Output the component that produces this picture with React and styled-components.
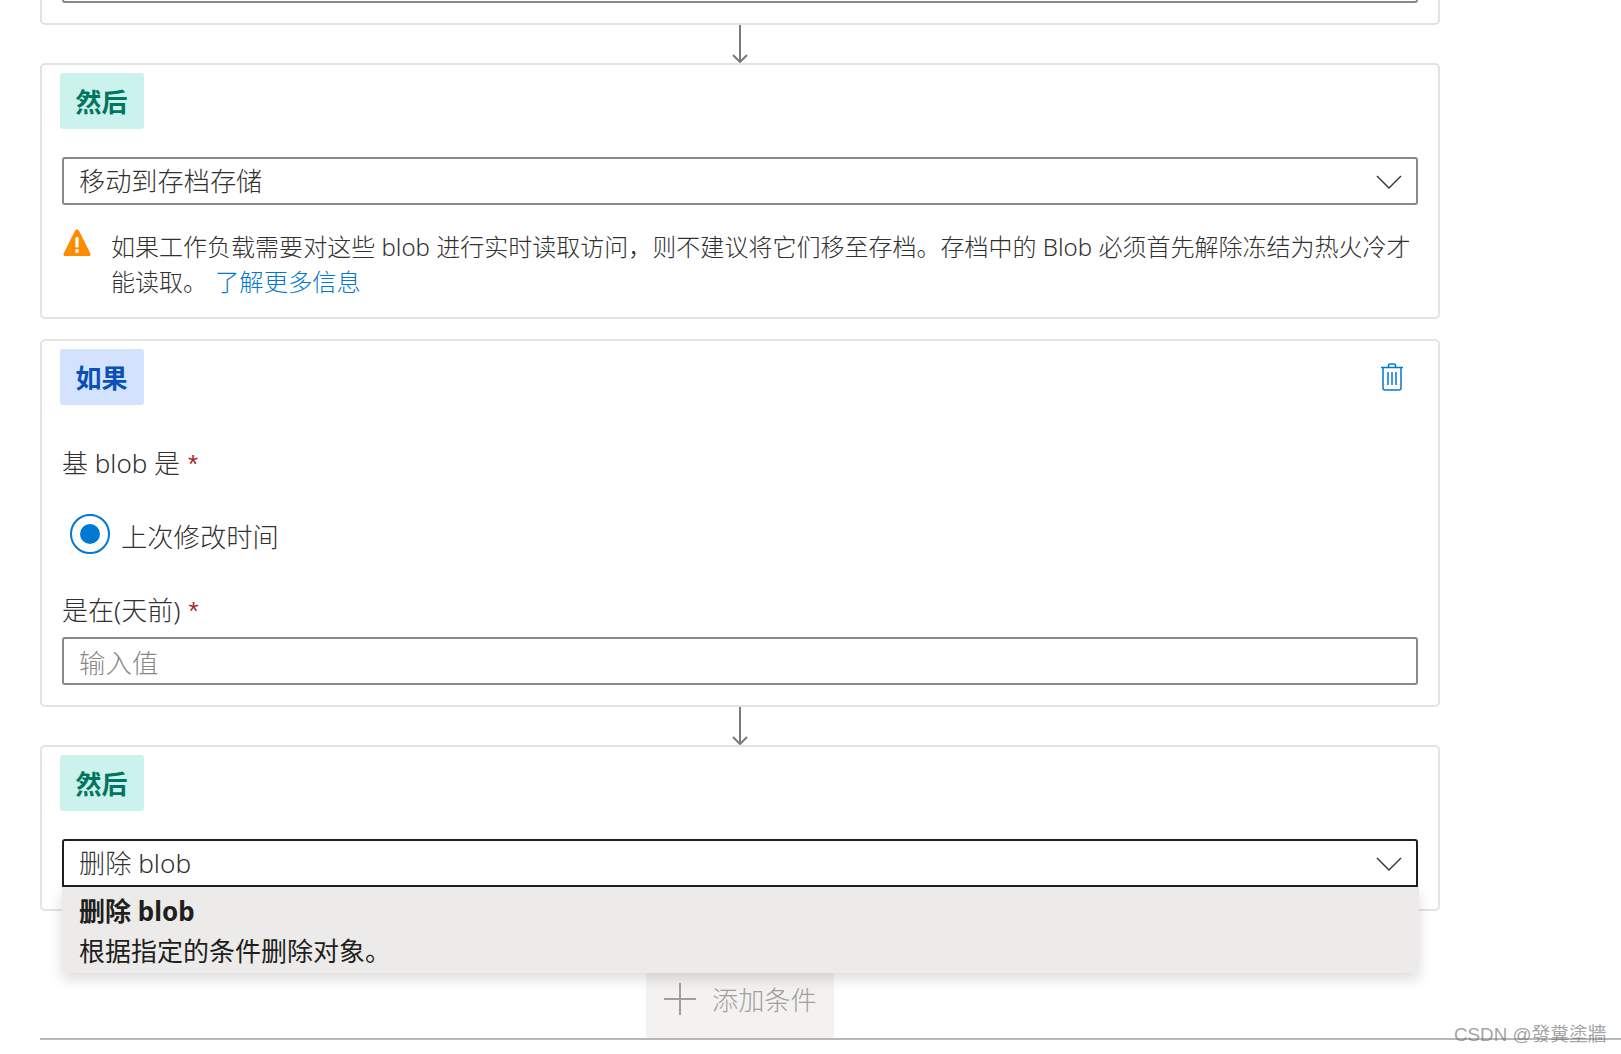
import React from "react";
import styled, { createGlobalStyle } from "styled-components";

const Global = createGlobalStyle`
  html, body { margin: 0; padding: 0; background: #fff; }
  body { font-family: "Noto Sans", "Noto Sans CJK SC", sans-serif; font-weight: 300; color: #323130; }
`;

const Page = styled.div`
  position: relative;
  height: 1054px;
  overflow: hidden;
  padding-left: 40px;
  box-sizing: border-box;
`;

const Stack = styled.div`
  width: 1400px;
  display: flex;
  flex-direction: column;
`;

const Card = styled.section`
  box-sizing: border-box;
  border: 2px solid #e3e3e3;
  border-radius: 5px;
  padding: 8px 20px ${(p) => p.$bottom ?? 20}px 18px;
  margin-top: ${(p) => p.$top || 0}px;
  display: flex;
  flex-direction: column;
  align-items: stretch;
  background: #fff;
`;

const CardHead = styled.div`
  display: flex;
  justify-content: space-between;
  align-items: center;
`;

const Badge = styled.div`
  width: 84px;
  height: 56px;
  box-sizing: border-box;
  padding-right: 1px;
  border-radius: 3px;
  display: flex;
  align-items: center;
  justify-content: center;
  font-size: 26px;
  font-weight: 700;
  background: ${(p) => (p.$kind === "if" ? "#d3e2fd" : "#ccf2ed")};
  color: ${(p) => (p.$kind === "if" ? "#0a50b8" : "#00755f")};
`;

const TrashButton = styled.div`
  display: flex;
  margin-right: 14px;
`;

const Field = styled.div`
  position: relative;
  margin: ${(p) => p.$top ?? 28}px 0 0 2px;
`;

const SelectBox = styled.div`
  box-sizing: border-box;
  height: 48px;
  border: 2px solid ${(p) => (p.$active ? "#201f1e" : "#8a8886")};
  border-radius: ${(p) => (p.$active ? "3px 3px 0 0" : "3px")};
  background: #fff;
  padding: 0 14px 0 15px;
  display: flex;
  align-items: center;
  justify-content: space-between;
  font-size: 26.2px;
  line-height: 44px;
  color: #323130;
`;

const Placeholder = styled.span`
  color: #8a8886;
  font-size: 26.5px;
  position: relative;
  top: 2px;
`;

const Chevron = styled.svg`
  width: 26px;
  height: 16px;
  flex: none;
  margin-top: 2px;
`;

const Warning = styled.div`
  display: flex;
  margin: 24px 0 0 3px;
`;

const WarningIcon = styled.svg`
  width: 28px;
  height: 28px;
  flex: none;
  margin-right: 20px;
`;

const WarningText = styled.p`
  margin: 0;
  font-size: 24.03px;
  line-height: 35px;
  color: #323130;
`;

const Link = styled.a`
  color: #0078d4;
  font-size: 24.3px;
  margin-left: 8px;
  text-decoration: none;
`;

const Label = styled.div`
  font-size: 26px;
  line-height: 36px;
  margin: ${(p) => p.$top}px 0 0 2px;
  color: #323130;
`;

const Required = styled.span`
  color: #a4262c;
  margin-left: 8px;
  font-family: "Liberation Sans", sans-serif;
  font-weight: 400;
`;

const RadioRow = styled.div`
  display: flex;
  align-items: center;
  margin: 32px 0 0 10px;
  font-size: 26.3px;
  line-height: 40px;
`;

const RadioOuter = styled.span`
  box-sizing: border-box;
  width: 40px;
  height: 40px;
  border: 2px solid #0078d4;
  border-radius: 50%;
  display: flex;
  align-items: center;
  justify-content: center;
  margin-right: 11px;
`;

const RadioDot = styled.span`
  width: 20px;
  height: 20px;
  border-radius: 50%;
  background: #0078d4;
`;

const RadioLabel = styled.span`
  position: relative;
  top: 3px;
`;

const Connector = styled.div`
  height: 38px;
  display: flex;
  justify-content: center;
`;

const ArrowIcon = styled.svg`
  width: 20px;
  height: 38px;
`;

const Menu = styled.div`
  position: absolute;
  left: 0;
  right: -1px;
  top: 100%;
  box-sizing: border-box;
  height: 86px;
  background: #edebe9;
  border-radius: 0 0 3px 3px;
  box-shadow: 0 6px 14px rgba(0, 0, 0, 0.14);
  padding: 4px 17px;
  color: #201f1e;
  font-size: 26px;
  line-height: 40px;
  font-weight: 400;
  z-index: 2;
`;

const MenuTitle = styled.div`
  font-weight: 700;
`;

const AddRow = styled.div`
  display: flex;
  justify-content: center;
  margin-top: 51px;
`;

const AddButton = styled.div`
  box-sizing: border-box;
  width: 188px;
  height: 76px;
  background: #f3f2f1;
  border-radius: 0 0 3px 3px;
  display: flex;
  align-items: center;
  padding: 0 0 3px 18px;
  gap: 16px;
  color: #a19f9d;
  font-size: 26.2px;
`;

const Rule = styled.div`
  height: 2px;
  background: #b8b8b8;
`;

const Watermark = styled.div`
  position: absolute;
  left: 1454px;
  top: 1022px;
  font-family: "Liberation Sans", "Noto Sans CJK TC", sans-serif;
  font-size: 18.8px;
  font-weight: 400;
  line-height: 26px;
  color: rgba(110, 110, 110, 0.65);
  white-space: nowrap;
`;

const ChevronDown = () => (
  <Chevron viewBox="0 0 26 16">
    <path d="M1 2 L13 14 L25 2" fill="none" stroke="#323130" strokeWidth="1.4" />
  </Chevron>
);

const Arrow = () => (
  <ArrowIcon viewBox="0 0 20 38">
    <path d="M10 0 V37 M3 30 L10 37 L17 30" fill="none" stroke="#7a7a7a" strokeWidth="2" />
  </ArrowIcon>
);

export default function App() {
  return (
    <Page>
      <Global />
      <Stack>
        <Card $top={-55}>
          <Field $top={0}>
            <SelectBox />
          </Field>
        </Card>
        <Connector><Arrow /></Connector>

        <Card $bottom={18}>
          <CardHead><Badge>然后</Badge></CardHead>
          <Field>
            <SelectBox>移动到存档存储<ChevronDown /></SelectBox>
          </Field>
          <Warning>
            <WarningIcon viewBox="0 0 28 28">
              <path d="M14 0.5 C15 0.5 15.6 1 16 1.8 L27.4 24.6 C28 26 27.2 27 26 27 H2 C0.8 27 0 26 0.6 24.6 L12 1.8 C12.4 1 13 0.5 14 0.5 Z" fill="#ff8c00" />
              <rect x="12.4" y="8" width="3.2" height="10.5" rx="1" fill="#fff" />
              <circle cx="14" cy="22" r="2" fill="#fff" />
            </WarningIcon>
            <WarningText>
              如果工作负载需要对这些 blob 进行实时读取访问，则不建议将它们移至存档。存档中的 Blob 必须首先解除冻结为热火冷才能读取。
              <Link>了解更多信息</Link>
            </WarningText>
          </Warning>
        </Card>

        <Card $top={20}>
          <CardHead>
            <Badge $kind="if">如果</Badge>
            <TrashButton>
              <svg width="24" height="28" viewBox="0 0 24 28" fill="none" stroke="#0078d4" strokeWidth="1.5">
                <path d="M1 4.5 H23" />
                <path d="M8.5 4.5 V2.5 C8.5 1.5 9 1 10 1 H14 C15 1 15.5 1.5 15.5 2.5 V4.5" />
                <path d="M3 4.5 V25 C3 26.2 3.8 27 5 27 H19 C20.2 27 21 26.2 21 25 V4.5" />
                <path d="M8 9 V22 M12 9 V22 M16 9 V22" />
              </svg>
            </TrashButton>
          </CardHead>
          <Label $top={40}>基 blob 是<Required>*</Required></Label>
          <RadioRow>
            <RadioOuter><RadioDot /></RadioOuter>
            <RadioLabel>上次修改时间</RadioLabel>
          </RadioRow>
          <Label $top={38}>是在(天前)<Required>*</Required></Label>
          <Field $top={8}>
            <SelectBox><Placeholder>输入值</Placeholder></SelectBox>
          </Field>
        </Card>
        <Connector><Arrow /></Connector>

        <Card $bottom={22}>
          <CardHead><Badge>然后</Badge></CardHead>
          <Field>
            <SelectBox $active>删除 blob<ChevronDown /></SelectBox>
            <Menu>
              <MenuTitle>删除 blob</MenuTitle>
              <div>根据指定的条件删除对象。</div>
            </Menu>
          </Field>
        </Card>

        <AddRow>
          <AddButton>
            <svg width="32" height="32" viewBox="0 0 32 32" stroke="#a19f9d" strokeWidth="2">
              <path d="M0 16 H32 M16 0 V32" />
            </svg>
            添加条件
          </AddButton>
        </AddRow>
      </Stack>
      <Rule />
      <Watermark>CSDN @發糞塗牆</Watermark>
    </Page>
  );
}
